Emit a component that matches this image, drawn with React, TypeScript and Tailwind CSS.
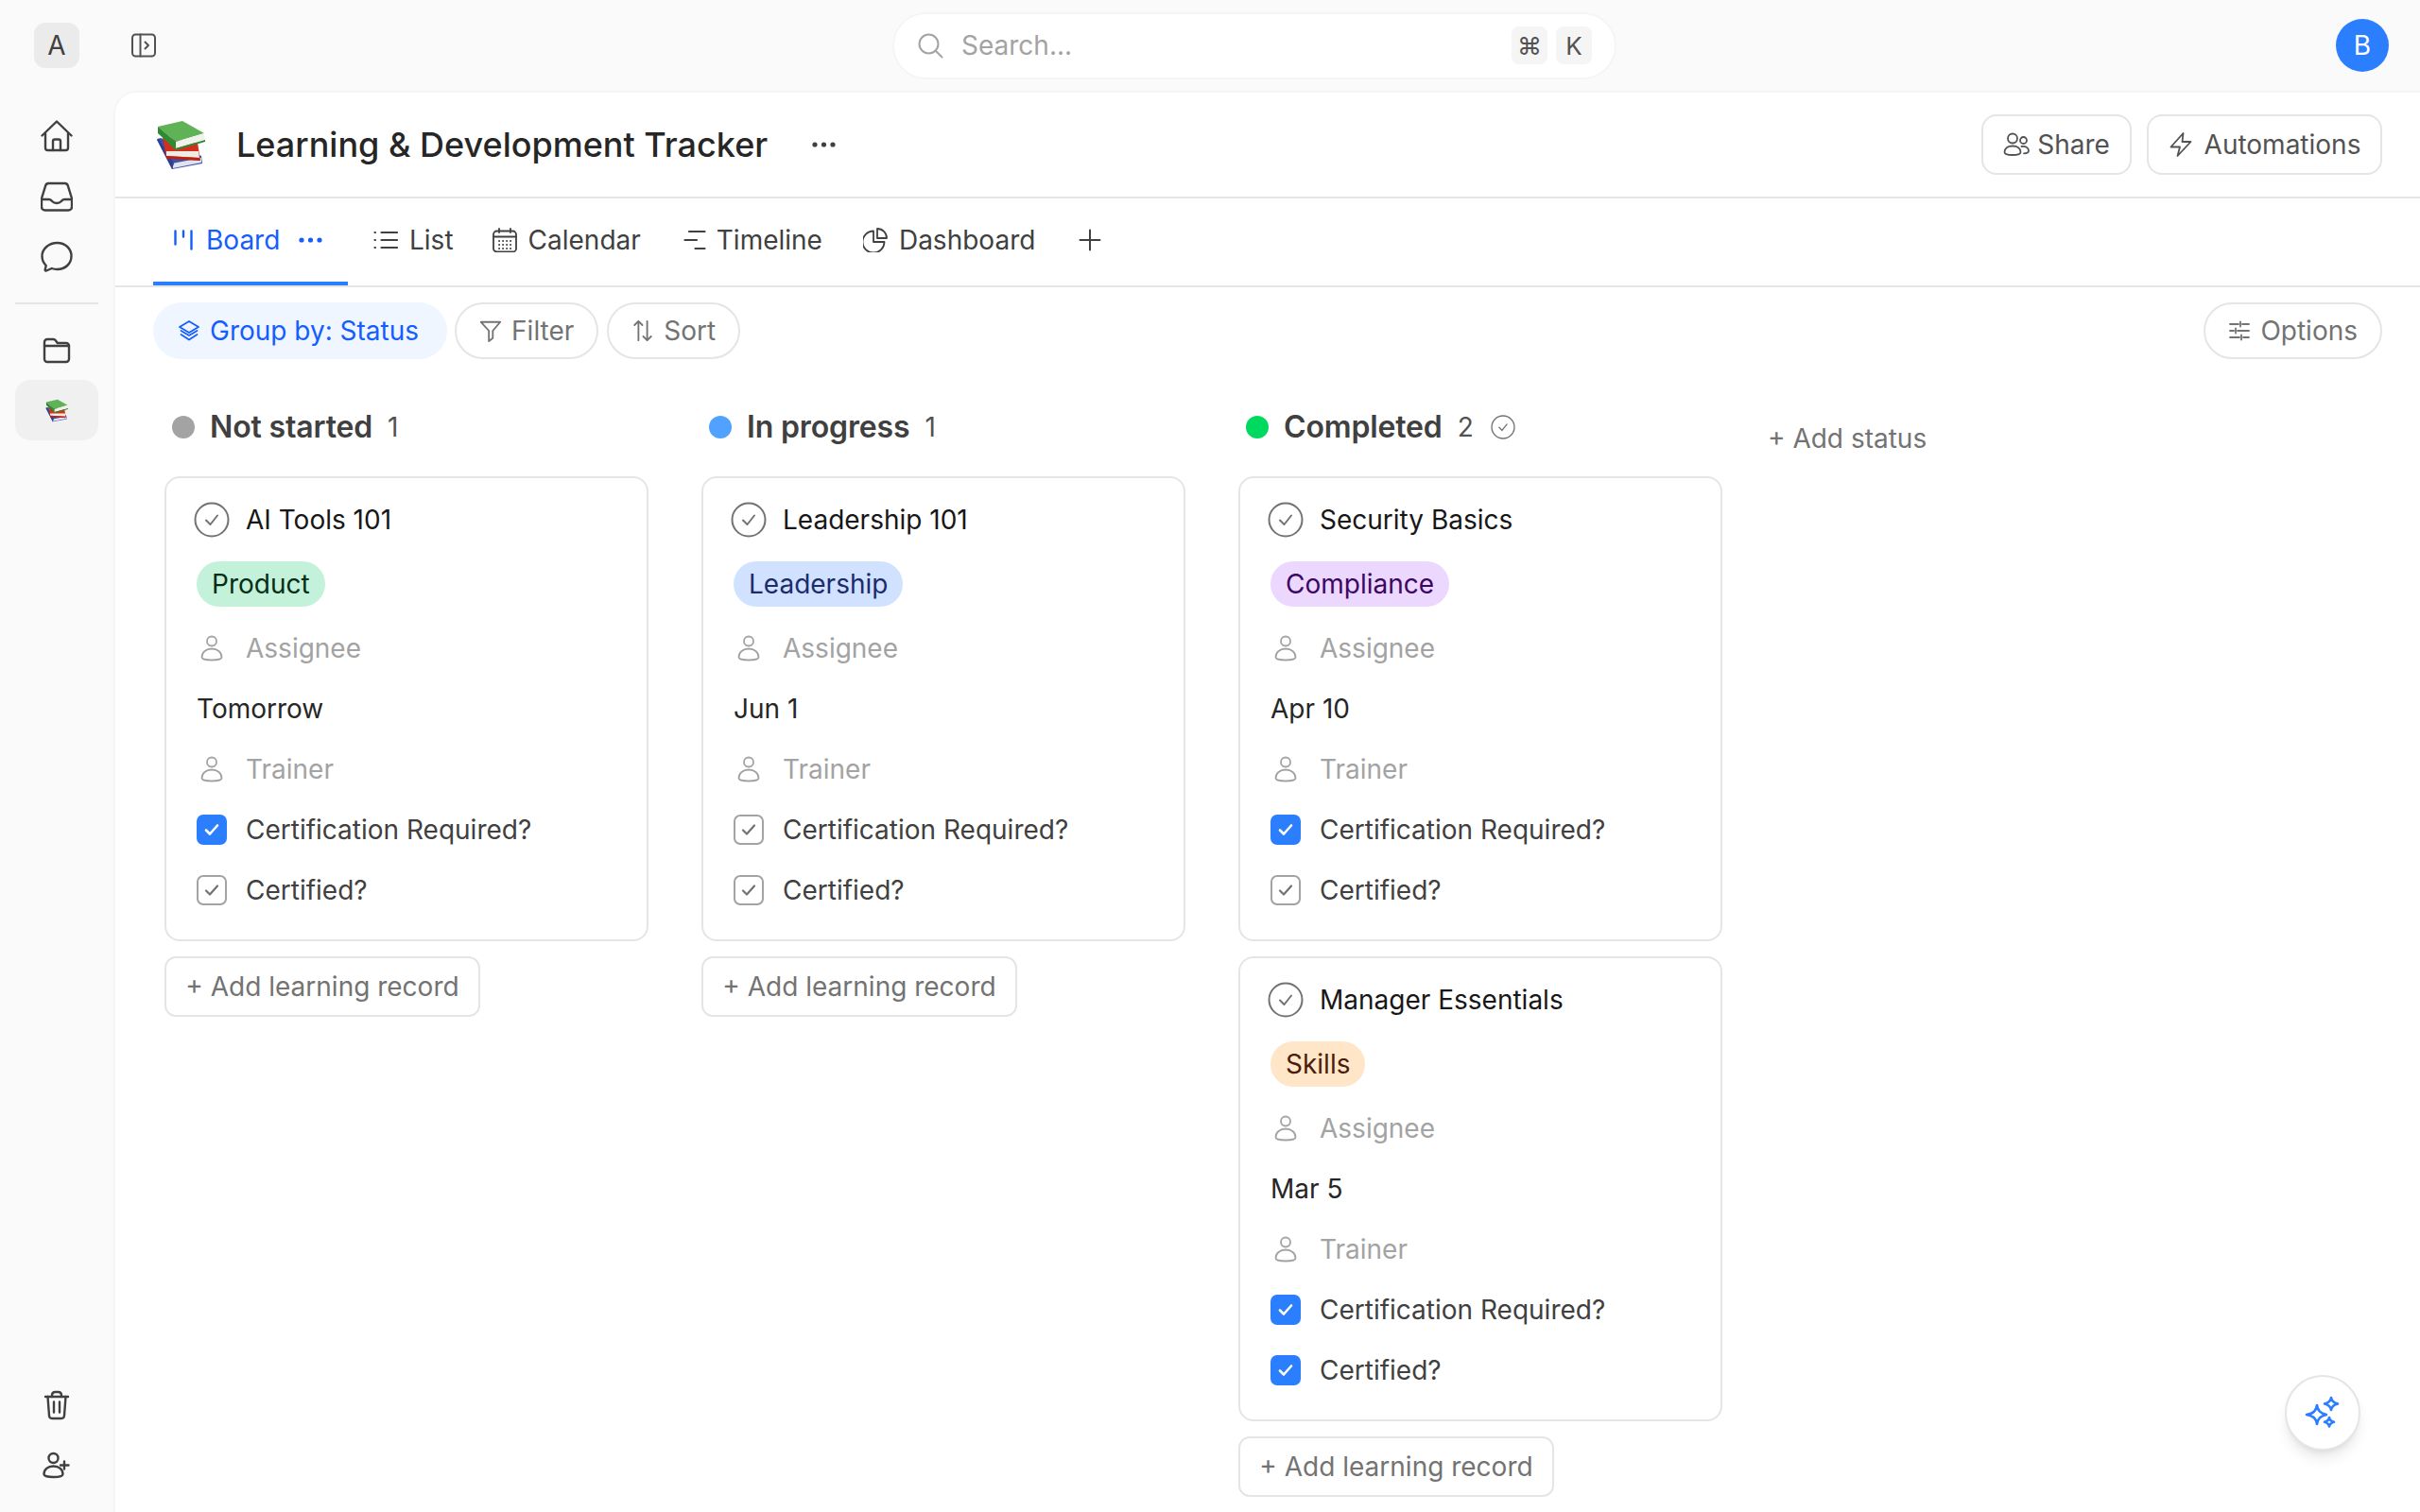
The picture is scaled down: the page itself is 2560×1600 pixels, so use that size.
import React from "react";

type IconProps = { className?: string };
const S = ({ size, vb, className, children, sw = 2 }: { size: number; vb?: string; className?: string; children: React.ReactNode; sw?: number }) => (
  <svg width={size} height={size} viewBox={vb ?? `0 0 ${size} ${size}`} fill="none" stroke="currentColor" strokeWidth={sw} strokeLinecap="round" strokeLinejoin="round" className={className}>
    {children}
  </svg>
);

const Books = ({ w, h }: { w: number; h: number }) => (
  <svg width={w} height={h} viewBox="0 0 52 53">
    <polygon points="1,20 5,19 48,38 49,46 17,52" fill="#3f51a8" />
    <polygon points="17,46 48,40 48,45 18,51" fill="#dfe3ee" />
    <polygon points="1,21 3,20 19,46 17,52" fill="#2f3f94" />
    <polygon points="7,19 44,24 47,43 11,40" fill="#d2301f" />
    <polygon points="11,33 45,33 46,40 11,38" fill="#f1ebe2" />
    <polygon points="11,38 46,40 47,43 11,41" fill="#b52417" />
    <polygon points="2,7 28,1 51,14 21,23" fill="#5fb356" />
    <polygon points="2,7 21,23 21,32 2,14" fill="#2f8a32" />
    <polygon points="21,23 51,14 52,21 21,30" fill="#f2f2ec" />
    <polygon points="21,30 52,21 52,23 21,32" fill="#2f8a32" />
  </svg>
);

const Home = () => (
  <S size={34} className="text-[#404040]" sw={2.4}>
    <path d="M1.5 16.5 17 1.5l15.5 15" />
    <path d="M5 14v15.5a2.5 2.5 0 0 0 2.5 2.5h19a2.5 2.5 0 0 0 2.5-2.5V14" />
    <path d="M13 32v-9.5a2 2 0 0 1 2-2h4a2 2 0 0 1 2 2V32" />
  </S>
);
const Inbox = () => (
  <S size={34} className="text-[#404040]" sw={2.4}>
    <path d="M8.5 3h17c1.6 0 2.8.8 3.3 2.4L33 19v9a3.5 3.5 0 0 1-3.5 3.5h-25A3.5 3.5 0 0 1 1 28v-9L5.2 5.4C5.7 3.8 6.9 3 8.5 3Z" />
    <path d="M1.5 20H9c1.7 0 2.5 1 3.5 2.3 1 1.2 2.3 1.7 4.5 1.7s3.5-.5 4.5-1.7C22.5 21 23.3 20 25 20h7.5" />
  </S>
);
const Chat = () => (
  <S size={34} className="text-[#404040]" sw={2.4}>
    <path d="M17.5 2C26 2 32.5 8 32.5 16S26 30 17.5 30c-2 0-4-.3-5.800-1L6 31.5c-.8.3-1.5-.3-1.3-1.100l1-4.400C3 23.300 1.500 20 1.500 16 1.500 8 9 2 17.500 2Z" />
  </S>
);
const Folder = () => (
  <S size={30} className="text-[#404040]" sw={2.4}>
    <path d="M2 8.500V7a3 3 0 0 1 3-3h6.500c1 0 1.700.4 2.300 1.200l2 2.800H25a3 3 0 0 1 3 3v14a3 3 0 0 1-3 3H5a3 3 0 0 1-3-3V8.500Z" />
    <path d="M2 11h26" />
  </S>
);
const Trash = () => (
  <S size={32} className="text-[#404040]" sw={2.4}>
    <path d="M4 7h24" />
    <path d="M6.500 7 8 27c.1 1.800 1.200 3 3 3h10c1.800 0 2.900-1.200 3-3l1.500-20" />
    <path d="M11 7V5.500C11 3.500 12.500 2 14.500 2h3C19.500 2 21 3.500 21 5.500V7" />
    <path d="M13 12.500v11M19 12.500v11" />
  </S>
);
const UserPlus = () => (
  <S size={30} className="text-[#404040]" sw={2.4}>
    <circle cx="11.500" cy="7" r="5" />
    <path d="M1.500 24c0-5 4-8.500 10-8.500s10 3.500 10 8.500c0 2-4.500 3-10 3s-10-1-10-3Z" />
    <path d="M23 10.500v8M19 14.500h8.500" />
  </S>
);
const PanelIcon = () => (
  <S size={26} className="text-[#525252]" sw={2}>
    <rect x="1" y="1.500" width="24" height="23" rx="3.500" />
    <path d="M9.500 1.500v23" />
    <path d="m14.500 9.500 3.500 3.500-3.500 3.500" />
  </S>
);
const SearchI = () => (
  <S size={28} className="text-[#a3a3a3]" sw={2}>
    <circle cx="12.500" cy="12.500" r="10" />
    <path d="m20 20 6.500 6.500" />
  </S>
);
const Person = ({ className }: IconProps) => (
  <S size={28} className={className ?? "text-[#a3a3a3]"} sw={1.8}>
    <circle cx="14" cy="6.500" r="5" />
    <path d="M3.500 23.500c0-5.500 4.500-9 10.500-9s10.500 3.500 10.500 9c0 1.800-4.500 3-10.500 3s-10.500-1.200-10.500-3Z" />
  </S>
);
const ShareI = () => (
  <S size={28} className="text-[#525252]" sw={1.8}>
    <circle cx="10" cy="7.500" r="5" />
    <circle cx="21.500" cy="9.500" r="3.500" />
    <path d="M1.500 22c0-4 3.500-6.500 8.500-6.500s8.500 2.500 8.500 6.500c0 2-3.500 3-8.500 3s-8.500-1-8.500-3Z" />
    <path d="M19.500 16c4-.8 7.500 1.200 7.500 4.500 0 1.800-2 2.800-5 2.800" />
  </S>
);
const Bolt = () => (
  <S size={28} className="text-[#525252]" sw={1.8}>
    <path d="M15.500 2 2.500 16.500H12L9.500 26l14-15H14.500L15.500 2Z" />
  </S>
);
const BoardI = () => (
  <svg width="20" height="22" viewBox="0 0 20 22" stroke="#155dfc" strokeWidth="2.400" strokeLinecap="round">
    <path d="M1.500 1.500v14M10 1.500v6M18.500 1.500v19" />
  </svg>
);
const Dots = ({ c, w = 25 }: { c: string; w?: number }) => (
  <svg width={w} height="6" viewBox="0 0 25 6" fill={c}>
    <circle cx="3" cy="3" r="2.600" />
    <circle cx="12.500" cy="3" r="2.600" />
    <circle cx="22" cy="3" r="2.600" />
  </svg>
);
const ListI = () => (
  <S size={26} className="text-[#404040]" sw={2.2}>
    <path d="M8.500 5H25M8.500 13H25M8.500 21H25" />
    <path d="M1.500 5h.5M1.500 13h.5M1.500 21h.5" />
  </S>
);
const CalendarI = () => (
  <S size={26} className="text-[#404040]" sw={1.8}>
    <rect x="1" y="3.500" width="24" height="22" rx="3.500" />
    <path d="M1 9.500h24M7 1v4M19 1v4" />
    <path d="M7 14h.2M11 14h.2M15 14h.2M19 14h.2M7 18h.2M11 18h.2M15 18h.2M19 18h.2M7 22h.2M11 22h.2M15 22h.2M19 22h.2" strokeWidth="1.800" />
  </S>
);
const TimelineI = () => (
  <S size={24} className="text-[#404040]" sw={2.2}>
    <path d="M6 3h16.500M1.500 12H14M12.500 21h10" />
  </S>
);
const DashI = () => (
  <S size={26} className="text-[#404040]" sw={1.8}>
    <path d="M11 3.500A11.500 11.500 0 1 0 22.500 15H11V3.500Z" />
    <path d="M15 1a10 10 0 0 1 10 10H15V1Z" />
  </S>
);
const PlusI = () => (
  <S size={24} className="text-[#404040]" sw={2}>
    <path d="M12 1.500v21M1.500 12h21" />
  </S>
);
const LayersI = () => (
  <S size={24} className="text-[#155dfc]" sw={1.8}>
    <path d="M12 2 22 8l-10 6L2 8l10-6Z" />
    <path d="m3.500 12 8.500 5 8.500-5" />
    <path d="m3.500 16 8.500 5.500 8.500-5.500" />
  </S>
);
const FilterI = () => (
  <S size={24} vb="0 0 26 26" className="text-[#737373]" sw={2}>
    <path d="M2 3h22l-8.500 10v8.500L11 25V13L2 3Z" />
  </S>
);
const SortI = () => (
  <S size={24} vb="0 0 26 26" className="text-[#737373]" sw={2}>
    <path d="M8 24V2M3.500 6.500 8 2l4.500 4.500" />
    <path d="M18 2v22M13.500 19.500 18 24l4.500-4.500" />
  </S>
);
const OptionsI = () => (
  <S size={24} className="text-[#737373]" sw={1.8}>
    <path d="M2 5h9M15 5h7M2 12h4M10 12h12M2 19h10M16 19h6" />
    <path d="M13 2.500v5M8 9.500v5M14 16.500v5" />
  </S>
);
const Sparkle = () => (
  <svg width="38" height="36" viewBox="0 0 38 36" fill="none" stroke="#2b7fff" strokeWidth="2.600" strokeLinejoin="round">
    <path d="M13 10c1 6 3.500 8.500 10 10-6.500 1.500-9 4-10 10-1-6-3.500-8.500-11-10 7.500-1.500 10-4 11-10Z" />
    <path d="M28 2c.6 3.600 2.400 5.400 7 6.500-4.600 1.100-6.400 2.900-7 6.500-.6-3.600-2.400-5.400-7-6.500 4.600-1.100 6.400-2.900 7-6.500Z" />
    <path d="M26 23c.4 2.600 1.600 3.900 5 4.800-3.400.9-4.600 2.200-5 4.700-.4-2.500-1.600-3.800-5-4.700 3.400-.9 4.600-2.200 5-4.800Z" />
  </svg>
);
const CircleCheck = ({ size = 38 }: { size?: number }) => (
  <svg width={size} height={size} viewBox="0 0 38 38" fill="none" stroke="#737373" strokeLinecap="round" strokeLinejoin="round">
    <circle cx="19" cy="19" r="17.500" strokeWidth="2" />
    <path d="m13 19.500 4.500 4.500L25 14.500" strokeWidth="2" />
  </svg>
);
const Checkbox = ({ on }: { on: boolean }) =>
  on ? (
    <span className="w-8 h-8 rounded-[7px] bg-[#2b7fff] flex items-center justify-center shrink-0">
      <svg width="20" height="20" viewBox="0 0 20 20" fill="none" stroke="#fff" strokeWidth="2.600" strokeLinecap="round" strokeLinejoin="round">
        <path d="m4 10.500 4 4L16 5.500" />
      </svg>
    </span>
  ) : (
    <span className="w-8 h-8 rounded-[7px] border-2 border-[#a3a3a3] flex items-center justify-center shrink-0 bg-white">
      <svg width="20" height="20" viewBox="0 0 20 20" fill="none" stroke="#737373" strokeWidth="2.200" strokeLinecap="round" strokeLinejoin="round">
        <path d="m4 10.500 4 4L16 5.500" />
      </svg>
    </span>
  );

type CardData = { title: string; tag: string; tagCls: string; date: string; cert: boolean; certified: boolean };

const Row = ({ icon, children, cls = "text-[#404040]" }: { icon?: React.ReactNode; children: React.ReactNode; cls?: string }) => (
  <div className={`h-16 flex items-center gap-5 ${cls}`}>
    {icon && <span className="w-8 flex justify-center shrink-0">{icon}</span>}
    <span>{children}</span>
  </div>
);

const Card = ({ d }: { d: CardData }) => (
  <div className="w-[512px] h-[492px] rounded-2xl border-2 border-[#e5e5e5] bg-white px-8 pt-3">
    <Row icon={<span className="-mx-1"><CircleCheck /></span>} cls="text-[#171717]">{d.title}</Row>
    <div className="h-[72px] pb-[1px] flex items-center">
      <span className={`h-12 px-4 rounded-full flex items-center ${d.tagCls}`}>{d.tag}</span>
    </div>
    <Row icon={<Person />} cls="text-[#a3a3a3]">Assignee</Row>
    <div className="h-16 flex items-center text-[#262626]">{d.date}</div>
    <Row icon={<Person />} cls="text-[#a3a3a3]">Trainer</Row>
    <Row icon={<Checkbox on={d.cert} />}>Certification Required?</Row>
    <Row icon={<Checkbox on={d.certified} />}>Certified?</Row>
  </div>
);

const AddBtn = () => (
  <button className="h-16 w-[334px] rounded-xl border-2 border-[#e5e5e5] bg-white text-[#737373] flex items-center justify-center whitespace-nowrap">
    + Add learning record
  </button>
);

const Column = ({ dot, name, count, done, cards }: { dot: string; name: string; count: number; done?: boolean; cards: CardData[] }) => (
  <div className="w-[512px] shrink-0 flex flex-col">
    <div className="h-[80px] flex items-center pl-2 text-[#404040]">
      <span className={`w-6 h-6 rounded-full ${dot}`} />
      <span className="ml-4 text-[32px] font-semibold tracking-[-0.15px] leading-none">{name}</span>
      <span className="ml-4 text-[#525252]">{count}</span>
      {done && <span className="ml-[18px] flex"><CircleCheck size={26} /></span>}
    </div>
    <div className="flex flex-col gap-4 mt-3">
      {cards.map((c) => (
        <div key={c.title} className="contents">
          <Card d={c} />
        </div>
      ))}
      <AddBtn />
    </div>
  </div>
);

const Tab = ({ icon, label, gap = "gap-3" }: { icon: React.ReactNode; label: string; gap?: string }) => (
  <div className={`flex items-center ${gap} text-[#404040]`}>
    {icon}
    <span>{label}</span>
  </div>
);

const Pill = ({ icon, label }: { icon: React.ReactNode; label: string }) => (
  <div className="h-[60px] px-6 rounded-full border-2 border-[#e5e5e5] bg-white text-[#737373] flex items-center gap-[10px]">
    {icon}
    <span>{label}</span>
  </div>
);

const product = "bg-[#c4f1d9] text-[#052e16]";
const leadership = "bg-[#d0e2ff] text-[#1c2b6b]";
const compliance = "bg-[#ecd7ff] text-[#3b0764]";
const skills = "bg-[#ffe6c9] text-[#4a1d0a]";

export default function App() {
  return (
    <div className="w-[2560px] h-[1600px] overflow-hidden bg-[#fafafa] flex flex-col text-[28px] font-[family-name:Inter,sans-serif]">
      {/* Top bar */}
      <div className="h-[96px] shrink-0 flex items-center pl-9 pr-[33px]">
        <div className="w-12 h-12 rounded-xl bg-[#ebebeb] flex items-center justify-center text-[#404040]">A</div>
        <span className="ml-[55px] flex"><PanelIcon /></span>
        <div className="ml-[779px] w-[766px] h-[71px] rounded-full bg-white border-2 border-[#f5f5f5] flex items-center pl-6 pr-6">
          <SearchI />
          <span className="ml-[19px] text-[#a3a3a3]">Search...</span>
          <span className="ml-auto w-[38px] h-[40px] rounded-lg bg-[#f5f5f5] text-[#525252] flex items-center justify-center text-[26px]">⌘</span>
          <span className="ml-[9px] w-[38px] h-[40px] rounded-lg bg-[#f5f5f5] text-[#525252] flex items-center justify-center text-[26px]">K</span>
        </div>
        <div className="ml-auto w-14 h-14 rounded-full bg-[#2b7fff] text-white flex items-center justify-center">B</div>
      </div>
      <div className="flex-1 flex min-h-0">
        {/* Sidebar */}
        <div className="w-[120px] shrink-0 flex flex-col items-center pt-[31px] pb-[34px]">
          <div className="h-[34px] flex items-center justify-center"><Home /></div>
          <div className="h-[34px] mt-[30px] flex items-center justify-center"><Inbox /></div>
          <div className="h-[34px] mt-[30px] flex items-center justify-center"><Chat /></div>
          <div className="w-[88px] h-[2px] bg-[#e5e5e5] mt-[31px]" />
          <div className="h-[30px] mt-[33px] flex items-center justify-center"><Folder /></div>
          <div className="w-[88px] h-16 rounded-2xl bg-[#f0f0f0] mt-[17px] flex items-center justify-center"><Books w={24} h={25} /></div>
          <div className="mt-auto flex"><Trash /></div>
          <div className="mt-[33px] flex"><UserPlus /></div>
        </div>
        {/* Main panel */}
        <div className="relative flex-1 min-w-0 bg-white rounded-tl-3xl border-t-2 border-l-2 border-[#f5f5f5] flex flex-col">
          <div className="h-[112px] shrink-0 border-b-2 border-[#e5e5e5] flex items-center pl-[43px] pr-[40px]">
            <Books w={52} h={53} />
            <h1 className="ml-[33px] text-[36px] font-medium text-[#262626] leading-none">Learning &amp; Development Tracker</h1>
            <span className="ml-[47px] flex"><Dots c="#404040" /></span>
            <div className="ml-auto flex gap-[16px] text-[#525252]">
              <div className="h-[64px] w-[159px] rounded-2xl border-2 border-[#e5e5e5] flex items-center justify-center gap-[8px]"><ShareI />Share</div>
              <div className="h-[64px] w-[249px] rounded-2xl border-2 border-[#e5e5e5] flex items-center justify-center gap-[10px]"><Bolt />Automations</div>
            </div>
          </div>
          <div className="h-[94px] shrink-0 border-b-2 border-[#e5e5e5] flex items-center pl-[40px] pb-[5px]">
            <div className="relative self-stretch -mb-[5px] pb-[5px] w-[206px] flex items-center pl-[22px] text-[#155dfc]">
              <BoardI />
              <span className="ml-[14px]">Board</span>
              <span className="ml-[20px] flex"><Dots c="#155dfc" /></span>
              <span className="absolute left-0 right-0 bottom-0 h-1 bg-[#2b7fff]" />
            </div>
            <div className="ml-[27px]"><Tab icon={<ListI />} label="List" /></div>
            <div className="ml-[41px]"><Tab icon={<CalendarI />} label="Calendar" /></div>
            <div className="ml-[45px]"><Tab icon={<TimelineI />} label="Timeline" gap="gap-[11px]" /></div>
            <div className="ml-[43px]"><Tab icon={<DashI />} label="Dashboard" /></div>
            <span className="ml-[46px] flex"><PlusI /></span>
          </div>
          <div className="h-[76px] shrink-0 flex items-end pl-[40px] pr-[40px]">
            <div className="h-[60px] pl-[26px] pr-[30px] rounded-full bg-[#eff6ff] text-[#155dfc] flex items-center gap-[10px]">
              <LayersI />
              <span>Group by: Status</span>
            </div>
            <div className="ml-2"><Pill icon={<FilterI />} label="Filter" /></div>
            <div className="ml-[9px]"><Pill icon={<SortI />} label="Sort" /></div>
            <div className="ml-auto"><Pill icon={<OptionsI />} label="Options" /></div>
          </div>
          {/* Board */}
          <div className="flex gap-14 pl-[52px] pt-[32px]">
            <Column dot="bg-[#a3a3a3]" name="Not started" count={1} cards={[
              { title: "AI Tools 101", tag: "Product", tagCls: product, date: "Tomorrow", cert: true, certified: false },
            ]} />
            <Column dot="bg-[#51a2ff]" name="In progress" count={1} cards={[
              { title: "Leadership 101", tag: "Leadership", tagCls: leadership, date: "Jun 1", cert: false, certified: false },
            ]} />
            <Column dot="bg-[#00d95f]" name="Completed" count={2} done cards={[
              { title: "Security Basics", tag: "Compliance", tagCls: compliance, date: "Apr 10", cert: true, certified: false },
              { title: "Manager Essentials", tag: "Skills", tagCls: skills, date: "Mar 5", cert: true, certified: true },
            ]} />
            <div className="pt-[31px] text-[#737373] whitespace-nowrap -ml-[8px]">+ Add status</div>
          </div>
          {/* FAB */}
          <div className="absolute left-[2295px] bottom-[65px] w-20 h-20 rounded-full bg-white border-2 border-[#e5e5e5] shadow-lg flex items-center justify-center"><Sparkle /></div>
        </div>
      </div>
    </div>
  );
}
